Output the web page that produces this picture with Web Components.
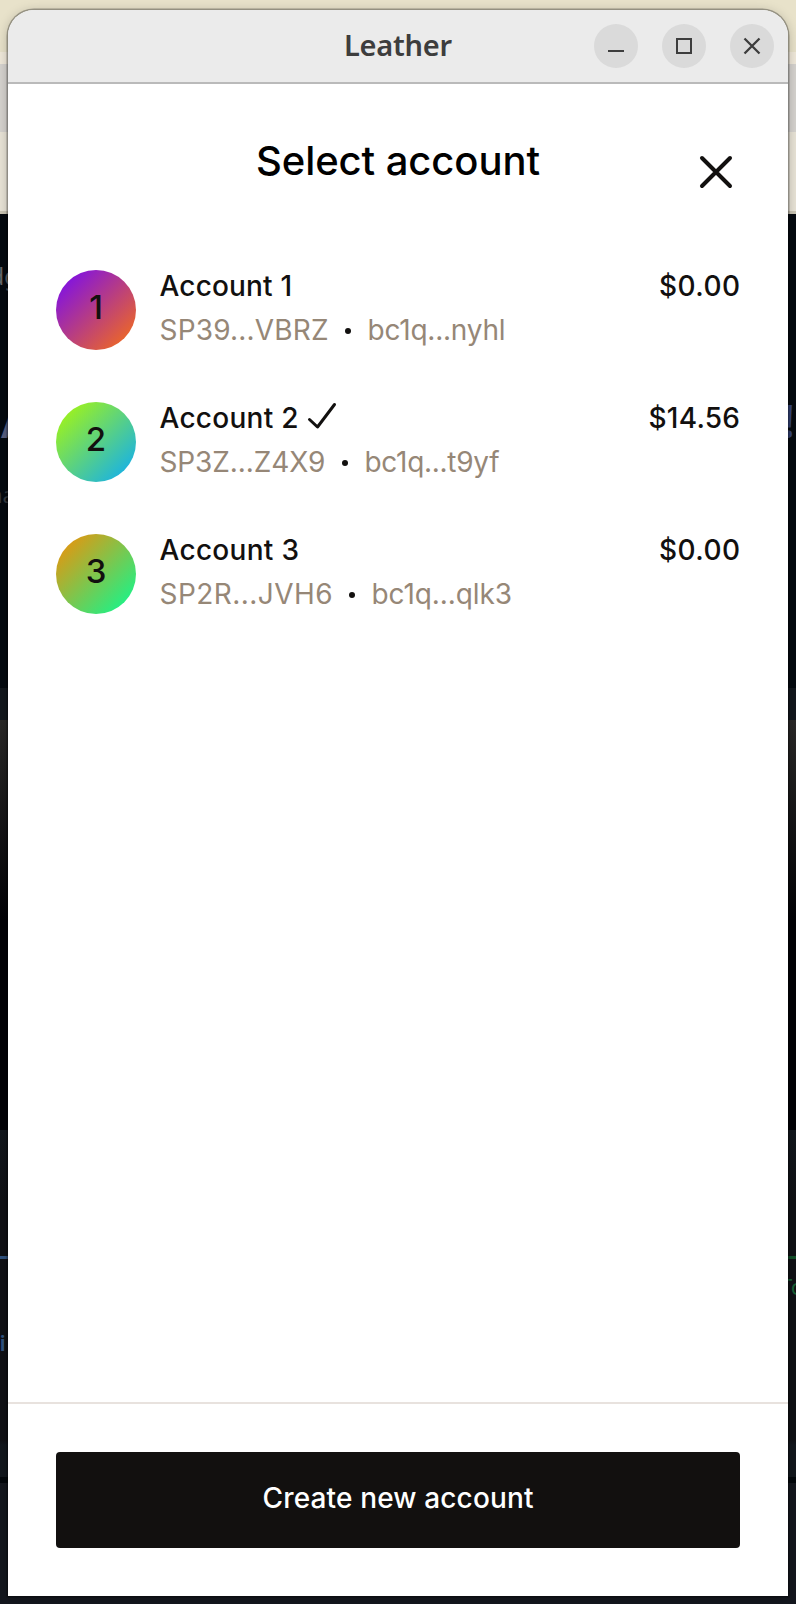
<!DOCTYPE html>
<html lang="en"><head><meta charset="utf-8"><title>Leather</title>
<style>body{margin:0;width:796px;height:1604px;overflow:hidden;font-family:Inter,"Liberation Sans",sans-serif}</style></head>
<body>
<desktop-backdrop>
  <wallet-window>
    <title-bar slot="bar">Leather</title-bar>
    <sheet-header>Select account</sheet-header>
    <account-list>
      <account-row index="1" name="Account 1" nw="132.5" stx="SP39...VBRZ" sw="169" btc="bc1q...nyhl" bw="138" balance="$0.00" pw="81" from="#7d0fe8" to="#f06a20"></account-row>
      <account-row index="2" name="Account 2" nw="139" stx="SP3Z...Z4X9" sw="166" btc="bc1q...t9yf" bw="135" balance="$14.56" pw="91.5" from="#a2f416" to="#15b0ea" selected></account-row>
      <account-row index="3" name="Account 3" nw="139.5" stx="SP2R...JVH6" sw="173" btc="bc1q...qlk3" bw="140.5" balance="$0.00" pw="81" from="#e6950e" to="#17f58b"></account-row>
    </account-list>
    <sheet-footer slot="footer">Create new account</sheet-footer>
  </wallet-window>
</desktop-backdrop>
<script>
const define=(name,html,setup)=>customElements.define(name,class extends HTMLElement{
  connectedCallback(){
    if(this.shadowRoot)return;
    this.attachShadow({mode:'open'}).innerHTML=typeof html==='function'?html(this):html;
    if(setup)setup(this);
  }
});

// A single line of text whose tracking is adjusted to fill the given width.
define('fit-text',`<style>:host{display:inline-block;white-space:nowrap}span{display:inline-block}</style><span><slot></slot></span>`,el=>{
  const s=el.shadowRoot.querySelector('span'),w=+el.getAttribute('w'),n=el.textContent.length;
  el.style.width=w+'px';
  const natural=s.getBoundingClientRect().width;
  s.style.letterSpacing=(w-natural)/(n-1)+'px';
});

define('desktop-backdrop',`<style>
:host{display:block;position:relative;box-sizing:border-box;width:796px;height:1604px;padding:10px 8px 8px;overflow:hidden;
background:linear-gradient(#e8e2ca 0 52px,#f0e9da 52px 64px,#d6d3cf 64px 132px,#e9e4d7 132px 211px,#cbc6b5 211px 214px,#050a10 214px 688px,#12171d 688px 720px,#2a2928 720px,#020206 920px 1130px,#12171d 1130px,#101115 1200px 1440px,#12171d 1445px 1477px,#03070b 1477px 1483px,#14171e 1483px)}
.f{position:absolute;white-space:nowrap;line-height:1;font-family:"Noto Sans",sans-serif}
</style>
<span class="f" style="left:-10px;top:265px;font-size:23px;color:#66686b">dg</span>
<span class="f" style="left:1px;top:397px;font-size:46px;font-weight:600;color:#596080">A</span>
<span class="f" style="left:-11px;top:483px;font-size:22px;color:#363a40">na</span>
<span class="f" style="right:1.5px;top:397px;font-size:46px;font-weight:700;color:#35467c">!</span>
<span class="f" style="left:-.5px;top:1331px;font-size:22px;font-weight:600;color:#315380">i</span>
<span class="f" style="left:780px;top:1275px;font-size:22px;color:#176035">To</span>
<i class="f" style="left:0;top:1256px;width:8px;height:3px;background:#315380"></i>
<i class="f" style="right:0;top:1256px;width:8px;height:3px;background:#125029"></i>
<slot></slot>`);

define('wallet-window',`<style>
:host{display:flex;position:relative;flex-direction:column;height:1586px;background:#fff;border-radius:26px 26px 0 0;box-shadow:0 0 0 1.5px rgba(0,0,0,.3),0 2px 12px rgba(0,0,0,.26)}
main{flex:1}
</style><slot name="bar"></slot><main><slot></slot></main><slot name="footer"></slot>`);

define('title-bar',`<style>
:host{display:grid;grid-template-columns:1fr auto 1fr;align-items:center;box-sizing:border-box;height:74px;padding:0 14px;background:#ebebeb;border-bottom:2px solid #bababa;border-radius:26px 26px 0 0;color:#3d3d3d}
.t{grid-column:2;font:600 29px/40px "Noto Sans",sans-serif;padding-bottom:2px}
nav{display:flex;justify-content:flex-end;gap:24px}
b{width:44px;height:44px;border-radius:50%;background:#dadada}
svg{display:block;fill:none;stroke:#3d3d3d;stroke-width:2}
</style><span class="t"><fit-text w="108">Leather</fit-text></span>
<nav><b><svg width="44" height="44"><path d="M14 27h16"/></svg></b><b><svg width="44" height="44"><path d="M15 15h14v14H15z"/></svg></b><b><svg width="44" height="44"><path d="M14.5 14.5l15 15m0-15l-15 15" stroke-width="2.3"/></svg></b></nav>`);

define('sheet-header',`<style>
:host{display:grid;grid-template-columns:1fr auto 1fr;padding:48px 48px 0;height:90px;color:#000}
h1{grid-column:2;margin:5px 0 0;font:500 40px/48px Inter,sans-serif}
svg{justify-self:end;margin-top:16px;stroke:#12100f;stroke-width:4;stroke-linecap:round;fill:none}
</style><h1><fit-text w="284">Select account</fit-text></h1>
<svg width="48" height="48"><path d="M10 10l28 28m0-28L10 38"/></svg>`);

define('account-list',`<style>:host{display:grid;gap:52px;padding:48px 48px 0}</style><slot></slot>`);

define('account-row',el=>{const a=k=>el.getAttribute(k);return `<style>
:host{display:flex;gap:24px;height:80px;color:#12100f;font:500 28px/40px Inter,sans-serif}
.avatar{width:80px;height:80px;border-radius:50%;background:linear-gradient(135deg,${a('from')} 8%,${a('to')} 92%);text-align:center;font-size:33px;line-height:74px}
.body{flex:1;margin-left:-.5px}
.name,.addr{display:flex;align-items:center;height:40px}
.name{height:32px}
.addr{height:40px;margin-top:8px;color:#968777;font-weight:400}
.addr i{width:6px;height:6px;border-radius:50%;background:#12100f;margin:1px 16.5px 0}
.name svg{margin-left:6.5px;stroke:#12100f;stroke-width:3;fill:none;stroke-linecap:round;stroke-linejoin:round}
.price{line-height:32px}
</style><div class="avatar">${a('index')}</div>
<div class="body"><div class="name"><fit-text w="${a('nw')}">${a('name')}</fit-text>${el.hasAttribute('selected')?'<svg width="32" height="32"><path d="M4.5 17.5l8 7.5L29.5 2.5"/></svg>':''}</div>
<div class="addr"><fit-text w="${a('sw')}">${a('stx')}</fit-text><i></i><fit-text w="${a('bw')}">${a('btc')}</fit-text></div></div>
<div class="price"><fit-text w="${a('pw')}">${a('balance')}</fit-text></div>`});

define('sheet-footer',`<style>
:host{display:block;padding:48px;border-top:2px solid #e8e2de}
button{display:flex;width:100%;height:96px;align-items:center;justify-content:center;border:0;border-radius:4px;background:#12100f;color:#fff;padding:0 0 4px;font:500 28px/40px Inter,sans-serif}
</style><button><fit-text w="271">Create new account</fit-text></button>`);
</script></body></html>
